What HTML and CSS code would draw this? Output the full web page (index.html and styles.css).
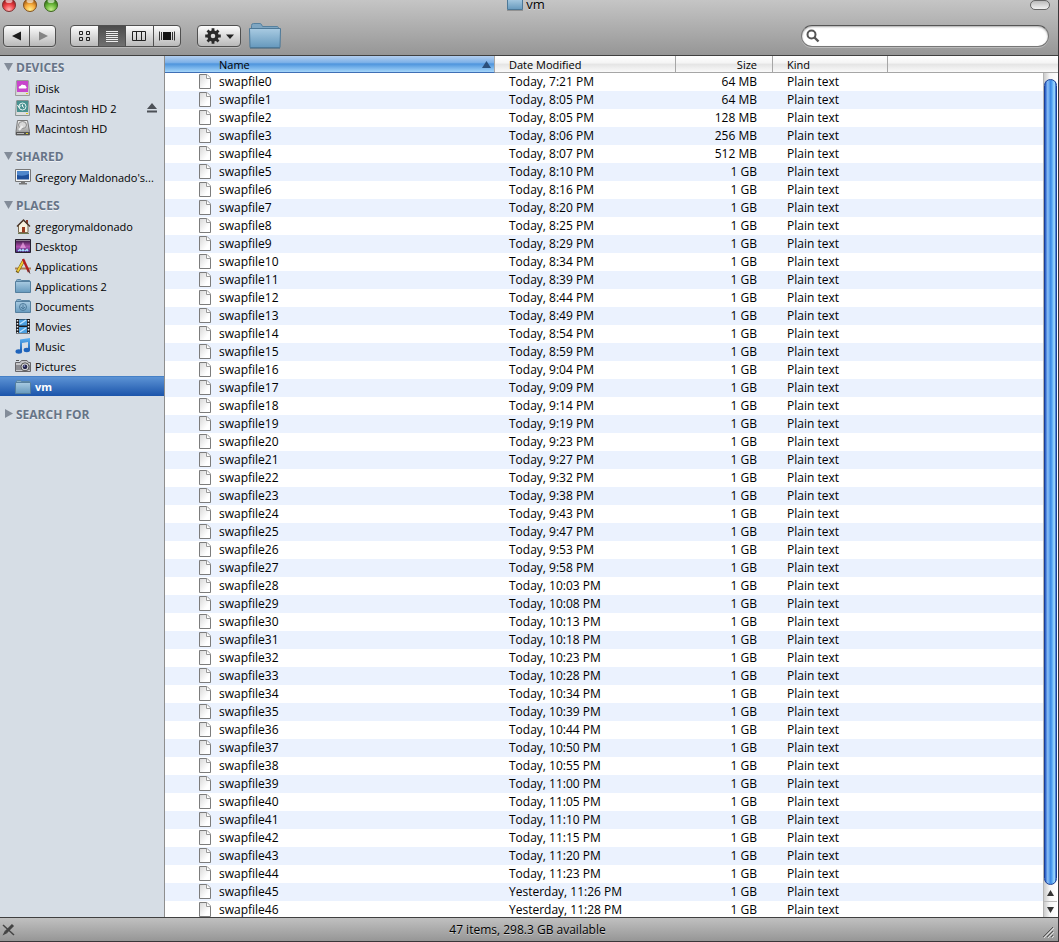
FILE: index.html
```
<!DOCTYPE html>
<html lang="en">
<head>
	<meta charset="utf-8">
	<title>vm</title>
	<link rel="stylesheet" href="styles.css">
</head>
<body>
	<!-- shared shapes -->
	<svg class="defs" width="0" height="0" aria-hidden="true">
		<defs>
			<linearGradient id="folder-fill" x1="0" y1="0" x2="0" y2="1">
				<stop offset="0" stop-color="#a9cbe2"/>
				<stop offset="1" stop-color="#6699bd"/>
			</linearGradient>
			<linearGradient id="page-fill" x1="0" y1="0" x2="1" y2="1">
				<stop offset="0" stop-color="#d6d6d6"/>
				<stop offset=".7" stop-color="#ffffff"/>
			</linearGradient>
			<linearGradient id="metal" x1="0" y1="0" x2="0" y2="1">
				<stop offset="0" stop-color="#f0f0f0"/>
				<stop offset="1" stop-color="#8a8a8a"/>
			</linearGradient>
			<linearGradient id="aurora" x1="0" y1="0" x2="0" y2="1">
				<stop offset="0" stop-color="#2b1438"/>
				<stop offset=".55" stop-color="#b04fae"/>
				<stop offset="1" stop-color="#3b2a7a"/>
			</linearGradient>
			<linearGradient id="note-fill" x1="0" y1="0" x2="0" y2="1">
				<stop offset="0" stop-color="#5ab0f2"/>
				<stop offset="1" stop-color="#1558b0"/>
			</linearGradient>
			<radialGradient id="red" cx=".5" cy=".85" r=".8">
				<stop offset="0" stop-color="#ffb0b0"/>
				<stop offset=".5" stop-color="#ee4347"/>
				<stop offset="1" stop-color="#8f1418"/>
			</radialGradient>
			<radialGradient id="yellow" cx=".5" cy=".85" r=".8">
				<stop offset="0" stop-color="#fff08e"/>
				<stop offset=".5" stop-color="#f7ab3c"/>
				<stop offset="1" stop-color="#93500f"/>
			</radialGradient>
			<radialGradient id="green" cx=".5" cy=".85" r=".8">
				<stop offset="0" stop-color="#c8f090"/>
				<stop offset=".5" stop-color="#6dba3c"/>
				<stop offset="1" stop-color="#2a6212"/>
			</radialGradient>
			<symbol id="folder" viewBox="0 0 16 16">
				<path d="M1.500 4.500V2.500Q1.500 1.500 2.500 1.500H5Q6 1.500 6.500 2.500H14.500V5H1.500Z" fill="#86aeca" stroke="#5b86a5"/>
				<path d="M.5 3.500H15.500V14.500H.5Z" fill="url(#folder-fill)" stroke="#557f9e"/>
			</symbol>
			<symbol id="page" viewBox="0 0 12 15">
				<path d="M.5 .5H8L11.500 4V14.500H.5Z" fill="url(#page-fill)" stroke="#7c7c7c"/>
				<path d="M7.500 .5V4.500H11.500" fill="#fff" stroke="#9a9a9a"/>
			</symbol>
		</defs>
	</svg>

	<div class="window">
		<header class="toolbar">
			<div class="title-row">
				<div class="lights">
					<button class="light" aria-label="Close"><svg width="14" height="13"><circle cx="7" cy="5" r="6.500" fill="url(#red)" stroke="#7b3434"/><ellipse cx="7" cy="1" rx="3.500" ry="2" fill="#fff" opacity=".6"/></svg></button>
					<button class="light" aria-label="Minimize"><svg width="14" height="13"><circle cx="7" cy="5" r="6.500" fill="url(#yellow)" stroke="#80501f"/><ellipse cx="7" cy="1" rx="3.500" ry="2" fill="#fff" opacity=".6"/></svg></button>
					<button class="light" aria-label="Zoom"><svg width="14" height="13"><circle cx="7" cy="5" r="6.500" fill="url(#green)" stroke="#3c6420"/><ellipse cx="7" cy="1" rx="3.500" ry="2" fill="#fff" opacity=".6"/></svg></button>
				</div>
				<h1 class="title">
					<svg width="16" height="11"><path d="M.5 -1V9.500H15.500V-1Z" fill="url(#folder-fill)" stroke="#4d7897"/><path d="M0 10.500H16" stroke="#555" opacity=".4"/></svg>
					<span>vm</span>
				</h1>
				<button class="pill" aria-label="Toggle toolbar"></button>
			</div>
			<div class="tools">
				<div class="group nav">
					<button aria-label="Back"><svg width="12" height="12"><path d="M10 1.500V10.500L1 6Z" fill="#1c1c1c"/></svg></button>
					<button aria-label="Forward"><svg width="12" height="12"><path d="M2 1.500V10.500L11 6Z" fill="#858585"/></svg></button>
				</div>
				<div class="group views">
					<button aria-label="Icon view"><svg width="13" height="12" fill="none" stroke="#222"><path d="M1.500 1.500h3v3h-3zM8.500 1.500h3v3h-3zM1.500 7.500h3v3h-3zM8.500 7.500h3v3h-3z"/></svg></button>
					<button class="active" aria-label="List view"><svg width="12" height="12"><path d="M0 1.500H12M0 3.500H12M0 5.500H12M0 7.500H12M0 9.500H12M0 11.500H12" stroke="#eee"/></svg></button>
					<button aria-label="Column view"><svg width="14" height="12" fill="none" stroke="#222"><path d="M.5 1.500H13.500V10.500H.5ZM4.500 1.500V10.500M9.500 1.500V10.500"/></svg></button>
					<button aria-label="Cover flow"><svg width="16" height="12"><path d="M4 2H12V10H4Z" fill="#111"/><path d="M.5 1.500V10.500M2.500 2V10M13.500 2V10M15.500 1.500V10.500" stroke="#333"/></svg></button>
				</div>
				<div class="group action">
					<button aria-label="Action">
						<svg width="16" height="16" viewBox="-8 -8 16 16"><circle r="4" fill="none" stroke="#2a2a2a" stroke-width="3.400"/><g stroke="#2a2a2a" stroke-width="2.800"><path d="M0 -7.800V-4M0 7.800V4M-7.800 0H-4M7.800 0H4M-5.500 -5.500L-3 -3M5.500 5.500L3 3M-5.500 5.500L-3 3M5.500 -5.500L3 -3"/></g></svg>
						<svg width="8" height="5"><path d="M0 .5H8L4 5Z" fill="#222"/></svg>
					</button>
				</div>
				<button class="big-folder" aria-label="Folder">
					<svg width="32" height="26" fill="url(#folder-fill)"><path d="M2.500 6V2.500Q2.500 .5 4.500 .5H11Q12.500 .5 13.500 3.500H28.500Q29.500 3.500 29.500 6Z" fill="#7ea6c2" stroke="#56819f"/><path d="M.5 5.500H31.500L31 24.500H1Z" stroke="#4d7897"/><path d="M1 25.500H31" stroke="#3c5f7a" opacity=".5"/></svg>
				</button>
				<label class="search">
					<svg width="14" height="14" fill="none" stroke="#555" stroke-width="2"><circle cx="5.500" cy="5.500" r="4"/><path d="M8.500 8.500L12.500 12.500" stroke-width="2.400"/></svg>
					<input type="text" aria-label="Search">
				</label>
			</div>
		</header>

		<div class="content">
			<nav class="sidebar">
				<section>
					<button class="heading"><svg width="10" height="10"><path d="M0 1H9L4.500 9Z" fill="#838c99"/></svg>DEVICES</button>
					<a href="#"><svg width="16" height="16"><path d="M1.500 1Q1.500 .5 2 .5H13Q13.500 .5 13.500 1L14.500 15.500H.5Z" fill="#ddd" stroke="#999"/><path d="M2 1H13V12H2Z" fill="#c845cc"/><path d="M4 8.500Q3 6 5.500 6Q6.500 3.500 8.500 5Q11 4.500 11 6.500Q12.500 7.500 11 8.500Z" fill="#fff"/><path d="M11 13.500H13" stroke="#d9c820"/></svg>iDisk</a>
					<a href="#"><svg width="16" height="16"><path d="M1.500 1Q1.500 .5 2 .5H13Q13.500 .5 13.500 1L14.500 15.500H.5Z" fill="#ddd" stroke="#879292"/><path d="M2 1H13V12H2Z" fill="#48918f"/><circle cx="7.500" cy="6.500" r="3.500" fill="none" stroke="#e4f3f2"/><path d="M2.500 5L4 7.500L6 5.500M7.500 4.500V6.500L9 7.500" fill="none" stroke="#fff"/><path d="M11 13.500H13" stroke="#d9c820"/></svg>Macintosh HD 2
						<svg class="eject" width="10" height="10"><path d="M5 0L10 6H0ZM0 7.500H10V9.500H0Z" fill="#4d5157"/></svg></a>
					<a href="#"><svg width="16" height="16"><path d="M2.500 .5H12.500L14.500 11.500V15H1V11.500Z" fill="url(#metal)" stroke="#777"/><ellipse cx="7.500" cy="5" rx="4" ry="3.500" fill="#d8d8d8" stroke="#8d8d8d"/><path d="M7.500 6L4 10" stroke="#eee" stroke-width="2"/><path d="M1 12H14.500V15H1Z" fill="#555"/><path d="M2 13.500H9" stroke="#bbb"/><path d="M11 13.500H13" stroke="#e0d030"/></svg>Macintosh HD</a>
				</section>
				<section>
					<button class="heading"><svg width="10" height="10"><path d="M0 1H9L4.500 9Z" fill="#838c99"/></svg>SHARED</button>
					<a href="#"><svg width="16" height="16"><path d="M.5 .5H15.500V12.500H.5Z" fill="#f4f4f4" stroke="#777"/><path d="M2 2H14V10.500H2Z" fill="#1e4f9b"/><path d="M2 2H14V5Q8 8 2 6Z" fill="#4f86cb"/><path d="M6 13H10V14H12V15.500H4V14H6Z" fill="#777"/></svg>Gregory Maldonado's...</a>
				</section>
				<section>
					<button class="heading"><svg width="10" height="10"><path d="M0 1H9L4.500 9Z" fill="#838c99"/></svg>PLACES</button>
					<a href="#"><svg width="16" height="16"><path d="M11 2H13V6H11Z" fill="#8c3b2a"/><path d="M3.500 7L8.500 2.500L13 7V14.500H3.500Z" fill="#f8f1de" stroke="#776a55"/><path d="M2 8.500L8.500 2L15 8.500" fill="none" stroke="#4e382b" stroke-width="1.500"/><path d="M7 9H10V14.500H7Z" fill="#9b3c20"/><path d="M3 15.500H14" stroke="#6d7a50"/></svg>gregorymaldonado</a>
					<a href="#"><svg width="16" height="16"><path d="M.5 1.500H15.500V14.500H.5Z" fill="url(#aurora)" stroke="#27202f"/><path d="M1 2.500H15" stroke="#ddd" opacity=".5"/><path d="M5 10L8 4L11 10Z" fill="#f0a9e6" opacity=".7"/><path d="M3 13L5 11.500L6 13M7 13L8 11.500L9 13M10 13L12 11.500L13 13" fill="none" stroke="#a5dcff" stroke-width="1.500"/></svg>Desktop</a>
					<a href="#"><svg width="16" height="16" fill="none"><path d="M0 10.500H16" stroke="#ad8052" stroke-width="2"/><path d="M9 2L2 14.500" stroke="#6d5410" stroke-width="3"/><path d="M9 2L2.500 13.500" stroke="#f0cc35" stroke-width="2"/><path d="M8 1L14 14" stroke="#b31d20" stroke-width="2.400"/><path d="M13 12L15 15.500" stroke="#444"/></svg>Applications</a>
					<a href="#"><svg width="16" height="16"><use href="#folder"/></svg>Applications 2</a>
					<a href="#"><svg width="16" height="16"><use href="#folder"/><circle cx="8" cy="9" r="3.500" fill="none" stroke="#4e7b9b"/><path d="M8 6.500V10.500M6 9L8 11L10 9" fill="none" stroke="#4e7b9b"/></svg>Documents</a>
					<a href="#"><svg width="16" height="16"><path d="M1 1H15V15.500H1Z" fill="#1b1b1f"/><path d="M4 1.500H12V7.500H4ZM4 9H12V15H4Z" fill="#4a9fe0"/><path d="M5 6L11 2M5 14L11 10" stroke="#bfe4ff" stroke-width="1.500"/><path d="M2.500 2V15M13.500 2V15" stroke="#eee" stroke-width="1.500" stroke-dasharray="1.500 1.500"/></svg>Movies</a>
					<a href="#"><svg width="16" height="16"><path d="M5 1.500L15 0V12H13V4L7 5V14H5Z" fill="url(#note-fill)"/><ellipse cx="3.800" cy="13.500" rx="3.300" ry="2.200" fill="#1f63bb"/><ellipse cx="11.800" cy="12" rx="3.200" ry="2.200" fill="#1f63bb"/></svg>Music</a>
					<a href="#"><svg width="16" height="16"><path d="M.5 4.500H5L6.500 2.500H12L13.500 4.500H15.500V13.500H.5Z" fill="#c6c6c9" stroke="#66666a"/><path d="M1 7H15V12H1Z" fill="#8d8d92"/><path d="M1 2.500H4" stroke="#555"/><circle cx="10" cy="8.800" r="4" fill="#ddd" stroke="#555"/><circle cx="10" cy="8.800" r="2.400" fill="#26264d"/><circle cx="9.300" cy="8" r=".8" fill="#a5a9ea"/></svg>Pictures</a>
					<a href="#" class="selected"><svg width="16" height="16"><use href="#folder"/></svg>vm</a>
				</section>
				<section>
					<button class="heading"><svg width="10" height="10"><path d="M1 0V9L9 4.500Z" fill="#838c99"/></svg>SEARCH FOR</button>
				</section>
			</nav>

			<main class="files">
				<table>
					<colgroup>
						<col class="col-name"><col class="col-date"><col class="col-size"><col class="col-kind"><col>
					</colgroup>
					<thead>
						<tr>
							<th class="name sorted"><div>Name<svg width="9" height="8"><path d="M4.500 0L9 7H0Z" fill="#2b4f7b"/></svg></div></th>
							<th>Date Modified</th>
							<th class="size">Size</th>
							<th>Kind</th>
							<th></th>
						</tr>
					</thead>
					<tbody id="rows"></tbody>
				</table>
				<div class="scrollbar">
					<div class="track"><div class="thumb"></div></div>
					<button aria-label="Scroll up"><svg width="7" height="6"><path d="M3.500 0L7 6H0Z" fill="#333"/></svg></button>
					<button aria-label="Scroll down"><svg width="7" height="6"><path d="M0 0H7L3.500 6Z" fill="#333"/></svg></button>
				</div>
			</main>
		</div>

		<footer class="status">
			<svg width="14" height="14"><path d="M2 2L13 12" stroke="#444" stroke-width="1.500"/><path d="M12 2L5 9" stroke="#444" stroke-width="3"/><path d="M4 7.500L6.500 10L1.500 12.500Z" fill="#444"/></svg>
			<span>47 items, 298.3 GB available</span>
			<svg class="grip" width="12" height="12" stroke="#555"><path d="M1 11L11 1M5 11L11 5M9 11L11 9"/><path d="M2 12L12 2M6 12L12 6M10 12L12 10" stroke="#ddd"/></svg>
		</footer>
	</div>

	<script>
		const times = [
			'7:21', '8:05', '8:05', '8:06', '8:07', '8:10', '8:16', '8:20', '8:25', '8:29',
			'8:34', '8:39', '8:44', '8:49', '8:54', '8:59', '9:04', '9:09', '9:14', '9:19',
			'9:23', '9:27', '9:32', '9:38', '9:43', '9:47', '9:53', '9:58', '10:03', '10:08',
			'10:13', '10:18', '10:23', '10:28', '10:34', '10:39', '10:44', '10:50', '10:55', '11:00',
			'11:05', '11:10', '11:15', '11:20', '11:23', '11:26', '11:28'
		];
		const sizes = ['64 MB', '64 MB', '128 MB', '256 MB', '512 MB'];

		//the last two files were written the day before
		document.getElementById('rows').innerHTML = times.map(function(time, i){
			const day = i < 45 ? 'Today' : 'Yesterday';
			return `<tr>
				<td class="name"><div><svg width="12" height="15"><use href="#page"/></svg>swapfile${i}</div></td>
				<td>${day}, ${time} PM</td>
				<td class="size">${sizes[i] || '1 GB'}</td>
				<td>Plain text</td>
				<td></td>
			</tr>`;
		}).join('');
	</script>
</body>
</html>
```
FILE: styles.css
```
*, *:before, *:after {
  box-sizing: border-box;
}

body {
  margin: 0;
  background: #2b272a;
  font-family: "Lucida Grande", "Open Sans", "Noto Sans", sans-serif;
  font-size: 12px;
  color: #000;
  overflow: hidden;
}

button {
  margin: 0;
  padding: 0;
  border: 0;
  background: none;
  font: inherit;
  color: inherit;
}

svg {
  display: block;
  flex: none;
}

.defs {
  position: absolute;
}

.window {
  display: flex;
  flex-direction: column;
  height: 100vh;
  border-right: 1px solid #3a3639;
  border-bottom: 1px solid #3a3639;
}

/* title and toolbar */
.toolbar {
  background: linear-gradient(#c5c5c5, #969696);
  border-bottom: 1px solid #404040;
}

.title-row {
  display: grid;
  grid-template-columns: 1fr auto 1fr;
  align-items: start;
  height: 25px;
  padding-right: 6px;
}

.lights {
  display: flex;
  gap: 7px;
  padding-left: 2px;
}

.title {
  display: flex;
  gap: 3px;
  margin: 0;
  font-size: 13px;
  font-weight: normal;
  line-height: 8px;
  text-shadow: 0 1px 0 #ddd;
}

.pill {
  justify-self: end;
  width: 20px;
  height: 10px;
  margin-right: 2px;
  border: 1px solid #666;
  border-radius: 5px;
  background: linear-gradient(#bbb, #f2f2f2);
}

.tools {
  display: flex;
  align-items: flex-start;
  height: 30px;
  padding: 0 9px 0 3px;
}

.group {
  display: flex;
  height: 22px;
  border: 1px solid #505050;
  border-radius: 4px;
  background: linear-gradient(#fcfcfc, #b9b9b9);
  box-shadow: 0 1px 0 #b8b8b8;
  overflow: hidden;
}

.group button {
  display: flex;
  flex: 1;
  align-items: center;
  justify-content: center;
  gap: 5px;
}

.group button + button {
  border-left: 1px solid #505050;
}

.group .active {
  background: linear-gradient(#4c4c4c, #707070);
}

.nav {
  width: 53px;
  margin-right: 14px;
}

.views {
  width: 111px;
  margin-right: 16px;
}

.action {
  width: 44px;
  margin-right: 8px;
}

.big-folder {
  margin-top: -2px;
}

.search {
  display: flex;
  align-items: center;
  width: 248px;
  height: 22px;
  margin-left: auto;
  padding: 0 4px;
  border: 1px solid #777;
  border-top-color: #555;
  border-radius: 11px;
  background: #fff;
  box-shadow: inset 0 1px 2px #aaa, 0 1px 0 #bbb;
}

.search input {
  flex: 1;
  min-width: 0;
  border: 0;
  outline: 0;
  background: none;
  font: inherit;
}

/* sidebar */
.content {
  display: flex;
  flex: 1;
  min-height: 0;
}

.sidebar {
  display: flex;
  flex: none;
  flex-direction: column;
  gap: 9px;
  width: 165px;
  padding-top: 2px;
  border-right: 1px solid #8e8e8e;
  background: #d6dde5;
}

.heading {
  display: flex;
  align-items: center;
  gap: 2px;
  height: 20px;
  padding: 0 0 2px 4px;
  font-weight: bold;
  color: #677487;
  text-shadow: 0 1px 0 #eef1f5;
}

.sidebar a {
  display: flex;
  align-items: center;
  gap: 4px;
  height: 20px;
  padding-left: 15px;
  font-size: 11px;
  color: #000;
  text-decoration: none;
  white-space: nowrap;
}

.sidebar .selected {
  border-top: 1px solid #4580c6;
  background: linear-gradient(#5c93d5, #1b54aa);
  font-weight: bold;
  color: #fff;
}

.eject {
  margin-left: auto;
  margin-right: 7px;
}

/* file list */
.files {
  position: relative;
  flex: 1;
  min-width: 0;
  background: #fff;
  overflow: hidden;
}

table {
  width: 100%;
  table-layout: fixed;
  border-collapse: separate;
  border-spacing: 0;
}

.col-name {
  width: 330px;
}

.col-date {
  width: 181px;
}

.col-size {
  width: 97px;
}

.col-kind {
  width: 115px;
}

th {
  height: 17px;
  padding: 2px 14px 0;
  border-right: 1px solid #a6a6a6;
  border-bottom: 1px solid #a6a6a6;
  background: linear-gradient(#fff, #f4f4f4 45%, #e4e4e4 50%, #fafafa);
  font-size: 11px;
  font-weight: normal;
  line-height: 14px;
  text-align: left;
}

th:last-child {
  border-right: 0;
}

th.sorted {
  padding: 2px 3px 0 54px;
  border-bottom-color: #3f6fb5;
  background: linear-gradient(#b3cff0, #7fb2e8 40%, #4f95dd 50%, #a5d6fa);
}

.sorted div {
  display: flex;
  align-items: center;
  justify-content: space-between;
}

td {
  height: 18px;
  padding: 0 14px;
  line-height: 18px;
  white-space: nowrap;
}

td.name {
  padding-left: 34px;
}

.name div {
  display: flex;
  align-items: center;
}

td.name div {
  gap: 8px;
}

td.name svg {
  margin-bottom: 1px;
}

th.size,
td.size {
  padding-right: 15px;
  text-align: right;
}

td.size {
  padding-right: 16px;
}

tbody tr:nth-child(even) {
  background: #ebf2fe;
}

.scrollbar {
  position: absolute;
  top: 17px;
  right: 0;
  bottom: 0;
  display: flex;
  flex-direction: column;
  width: 15px;
  padding-right: 1px;
  border-left: 1px solid #b5b5b5;
  background: linear-gradient(to right, #ccc, #f5f5f5 40%, #fff);
}

.track {
  flex: 1;
  padding-top: 6px;
}

.thumb {
  height: 100%;
  border: 1px solid #1c3f94;
  border-radius: 7px;
  background: linear-gradient(to right, #1f55c4, #8cc0f6 25%, #3f8ce6 50%, #4c9cf0 60%, #a0dcff 85%, #1f58c0);
}

.scrollbar button {
  display: flex;
  align-items: center;
  justify-content: center;
  height: 16px;
}

.scrollbar button + button {
  border-top: 1px solid #bbb;
}

/* status bar */
.status {
  display: grid;
  grid-template-columns: 1fr auto 1fr;
  align-items: center;
  height: 24px;
  padding: 0 4px 0 1px;
  border-top: 1px solid #404040;
  background: linear-gradient(#c0c0c0, #969696);
  text-shadow: 0 1px 0 #ccc;
}

.grip {
  justify-self: end;
  align-self: end;
  margin-bottom: 3px;
}
```
